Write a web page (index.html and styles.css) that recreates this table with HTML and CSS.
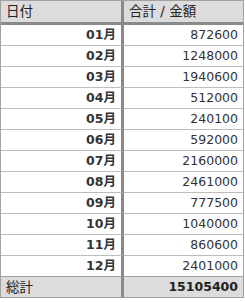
FILE: index.html
```html
<!DOCTYPE html>
<html lang="ja">
<head>
<meta charset="utf-8">
<link rel="stylesheet" href="styles.css">
</head>
<body>
<table class="sum">
  <thead>
    <tr><th class="c1">日付</th><th class="c2">合計 / 金額</th></tr>
  </thead>
  <tbody>
    <tr><td class="m">01月</td><td class="v">872600</td></tr>
    <tr><td class="m">02月</td><td class="v">1248000</td></tr>
    <tr><td class="m">03月</td><td class="v">1940600</td></tr>
    <tr><td class="m">04月</td><td class="v">512000</td></tr>
    <tr><td class="m">05月</td><td class="v">240100</td></tr>
    <tr><td class="m">06月</td><td class="v">592000</td></tr>
    <tr><td class="m">07月</td><td class="v">2160000</td></tr>
    <tr><td class="m">08月</td><td class="v">2461000</td></tr>
    <tr><td class="m">09月</td><td class="v">777500</td></tr>
    <tr><td class="m">10月</td><td class="v">1040000</td></tr>
    <tr><td class="m">11月</td><td class="v">860600</td></tr>
    <tr><td class="m">12月</td><td class="v">2401000</td></tr>
  </tbody>
  <tfoot>
    <tr><td class="tl">総計</td><td class="tv">15105400</td></tr>
  </tfoot>
</table>
</body>
</html>
```

FILE: styles.css
```css
html, body {
  margin: 0;
  padding: 0;
  background: #fff;
}
.sum {
  border-collapse: separate;
  border-spacing: 0;
  width: 244px;
  margin: 0;
  font-family: "DejaVu Sans", "Noto Sans CJK JP", sans-serif;
  font-size: 12.5px;
  color: #333;
  border: 1px solid #a0a0a0;
  table-layout: fixed;
}
.sum th, .sum td {
  padding: 0 5px;
  white-space: nowrap;
  box-sizing: content-box;
  vertical-align: middle;
}
.sum th {
  background: #dcdcdc;
  font-weight: normal;
  font-size: 13.5px;
  text-align: left;
  height: 21px;
  line-height: 21px;
  color: #222;
  border-bottom: 3px solid #8a8a8a;
}
.c1 {
  width: 110px;
  border-right: 3px solid #8a8a8a;
}
.c2 {
  padding-left: 4px;
}
.sum td {
  height: 20px;
  line-height: 20px;
  border-bottom: 1px solid #bdbdbd;
}
.m {
  text-align: right;
  font-weight: bold;
  border-right: 3px solid #8a8a8a;
}
.v {
  text-align: right;
}
.sum tfoot td {
  background: #dcdcdc;
  border-bottom: 0;
  color: #222;
}
.sum tbody tr:last-child td {
  border-bottom-color: #a0a0a0;
}
.tl {
  text-align: left;
  font-size: 13.5px;
  border-right: 3px solid #8a8a8a;
}
.tv {
  text-align: right;
  font-weight: bold;
}
```
